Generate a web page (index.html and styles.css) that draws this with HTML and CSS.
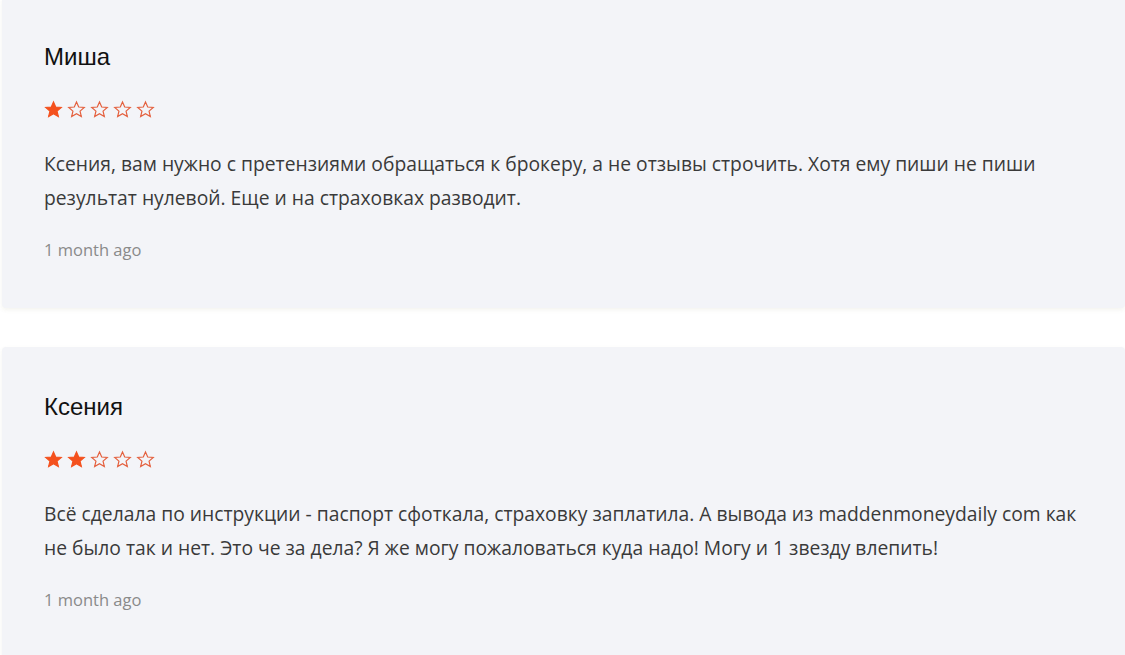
FILE: index.html
```html
<!DOCTYPE html>
<html lang="ru">
<head>
<meta charset="utf-8">
<title>Отзывы</title>
<link rel="stylesheet" href="styles.css">
</head>
<body>
<div class="reviews">
  <div class="review">
    <div class="name">Миша</div>
    <div class="stars">
      <svg class="star filled" viewBox="0 0 24 24"><path d="M12 2.5l2.8 6.4 7 .6-5.3 4.6 1.6 6.8L12 17.3l-6.1 3.6 1.6-6.8L2.2 9.5l7-.6z"/></svg>
      <svg class="star" viewBox="0 0 24 24"><path d="M12 2.5l2.8 6.4 7 .6-5.3 4.6 1.6 6.8L12 17.3l-6.1 3.6 1.6-6.8L2.2 9.5l7-.6z"/></svg>
      <svg class="star" viewBox="0 0 24 24"><path d="M12 2.5l2.8 6.4 7 .6-5.3 4.6 1.6 6.8L12 17.3l-6.1 3.6 1.6-6.8L2.2 9.5l7-.6z"/></svg>
      <svg class="star" viewBox="0 0 24 24"><path d="M12 2.5l2.8 6.4 7 .6-5.3 4.6 1.6 6.8L12 17.3l-6.1 3.6 1.6-6.8L2.2 9.5l7-.6z"/></svg>
      <svg class="star" viewBox="0 0 24 24"><path d="M12 2.5l2.8 6.4 7 .6-5.3 4.6 1.6 6.8L12 17.3l-6.1 3.6 1.6-6.8L2.2 9.5l7-.6z"/></svg>
    </div>
    <p class="text">Ксения, вам нужно с претензиями обращаться к брокеру, а не отзывы строчить. Хотя ему пиши не пиши результат нулевой. Еще и на страховках разводит.</p>
    <div class="date">1 month ago</div>
  </div>
  <div class="review">
    <div class="name">Ксения</div>
    <div class="stars">
      <svg class="star filled" viewBox="0 0 24 24"><path d="M12 2.5l2.8 6.4 7 .6-5.3 4.6 1.6 6.8L12 17.3l-6.1 3.6 1.6-6.8L2.2 9.5l7-.6z"/></svg>
      <svg class="star filled" viewBox="0 0 24 24"><path d="M12 2.5l2.8 6.4 7 .6-5.3 4.6 1.6 6.8L12 17.3l-6.1 3.6 1.6-6.8L2.2 9.5l7-.6z"/></svg>
      <svg class="star" viewBox="0 0 24 24"><path d="M12 2.5l2.8 6.4 7 .6-5.3 4.6 1.6 6.8L12 17.3l-6.1 3.6 1.6-6.8L2.2 9.5l7-.6z"/></svg>
      <svg class="star" viewBox="0 0 24 24"><path d="M12 2.5l2.8 6.4 7 .6-5.3 4.6 1.6 6.8L12 17.3l-6.1 3.6 1.6-6.8L2.2 9.5l7-.6z"/></svg>
      <svg class="star" viewBox="0 0 24 24"><path d="M12 2.5l2.8 6.4 7 .6-5.3 4.6 1.6 6.8L12 17.3l-6.1 3.6 1.6-6.8L2.2 9.5l7-.6z"/></svg>
    </div>
    <p class="text">Всё сделала по инструкции - паспорт сфоткала, страховку заплатила. А вывода из maddenmoneydaily com как не было так и нет. Это че за дела? Я же могу пожаловаться куда надо! Могу и 1 звезду влепить!</p>
    <div class="date">1 month ago</div>
  </div>
</div>
</body>
</html>
```
FILE: styles.css
```css
html, body {
  margin: 0;
  padding: 0;
  background: #ffffff;
  overflow: hidden;
}
.reviews {
  display: flex;
  flex-direction: column;
  gap: 39px;
  margin-top: -3px;
  padding-left: 2px;
}
.review {
  background: #f3f4f8;
  border-radius: 4px;
  box-shadow: 0 2px 4px rgba(120, 110, 60, 0.08);
  padding: 45px 40px 46px 42px;
}
.name {
  font-family: "Liberation Sans", Arial, sans-serif;
  font-size: 24px;
  line-height: 30px;
  color: #111111;
}
.stars {
  display: flex;
  gap: 4px;
  margin-top: 29px;
  height: 18px;
}
.star {
  width: 19px;
  height: 19px;
  margin-top: -1px;
}
.star path {
  fill: none;
  stroke: #e4603e;
  stroke-width: 1.5;
  stroke-linejoin: miter;
}
.star.filled path {
  fill: #f4511e;
  stroke: #f4511e;
}
.text {
  margin: 28px 0 0;
  font-family: "Open Sans", sans-serif;
  font-size: 19.3px;
  line-height: 34px;
  color: #3a3a3a;
}
.date {
  margin-top: 23px;
  font-family: "Open Sans", sans-serif;
  font-size: 16.5px;
  line-height: 24px;
  color: #8a8a8a;
}
```
